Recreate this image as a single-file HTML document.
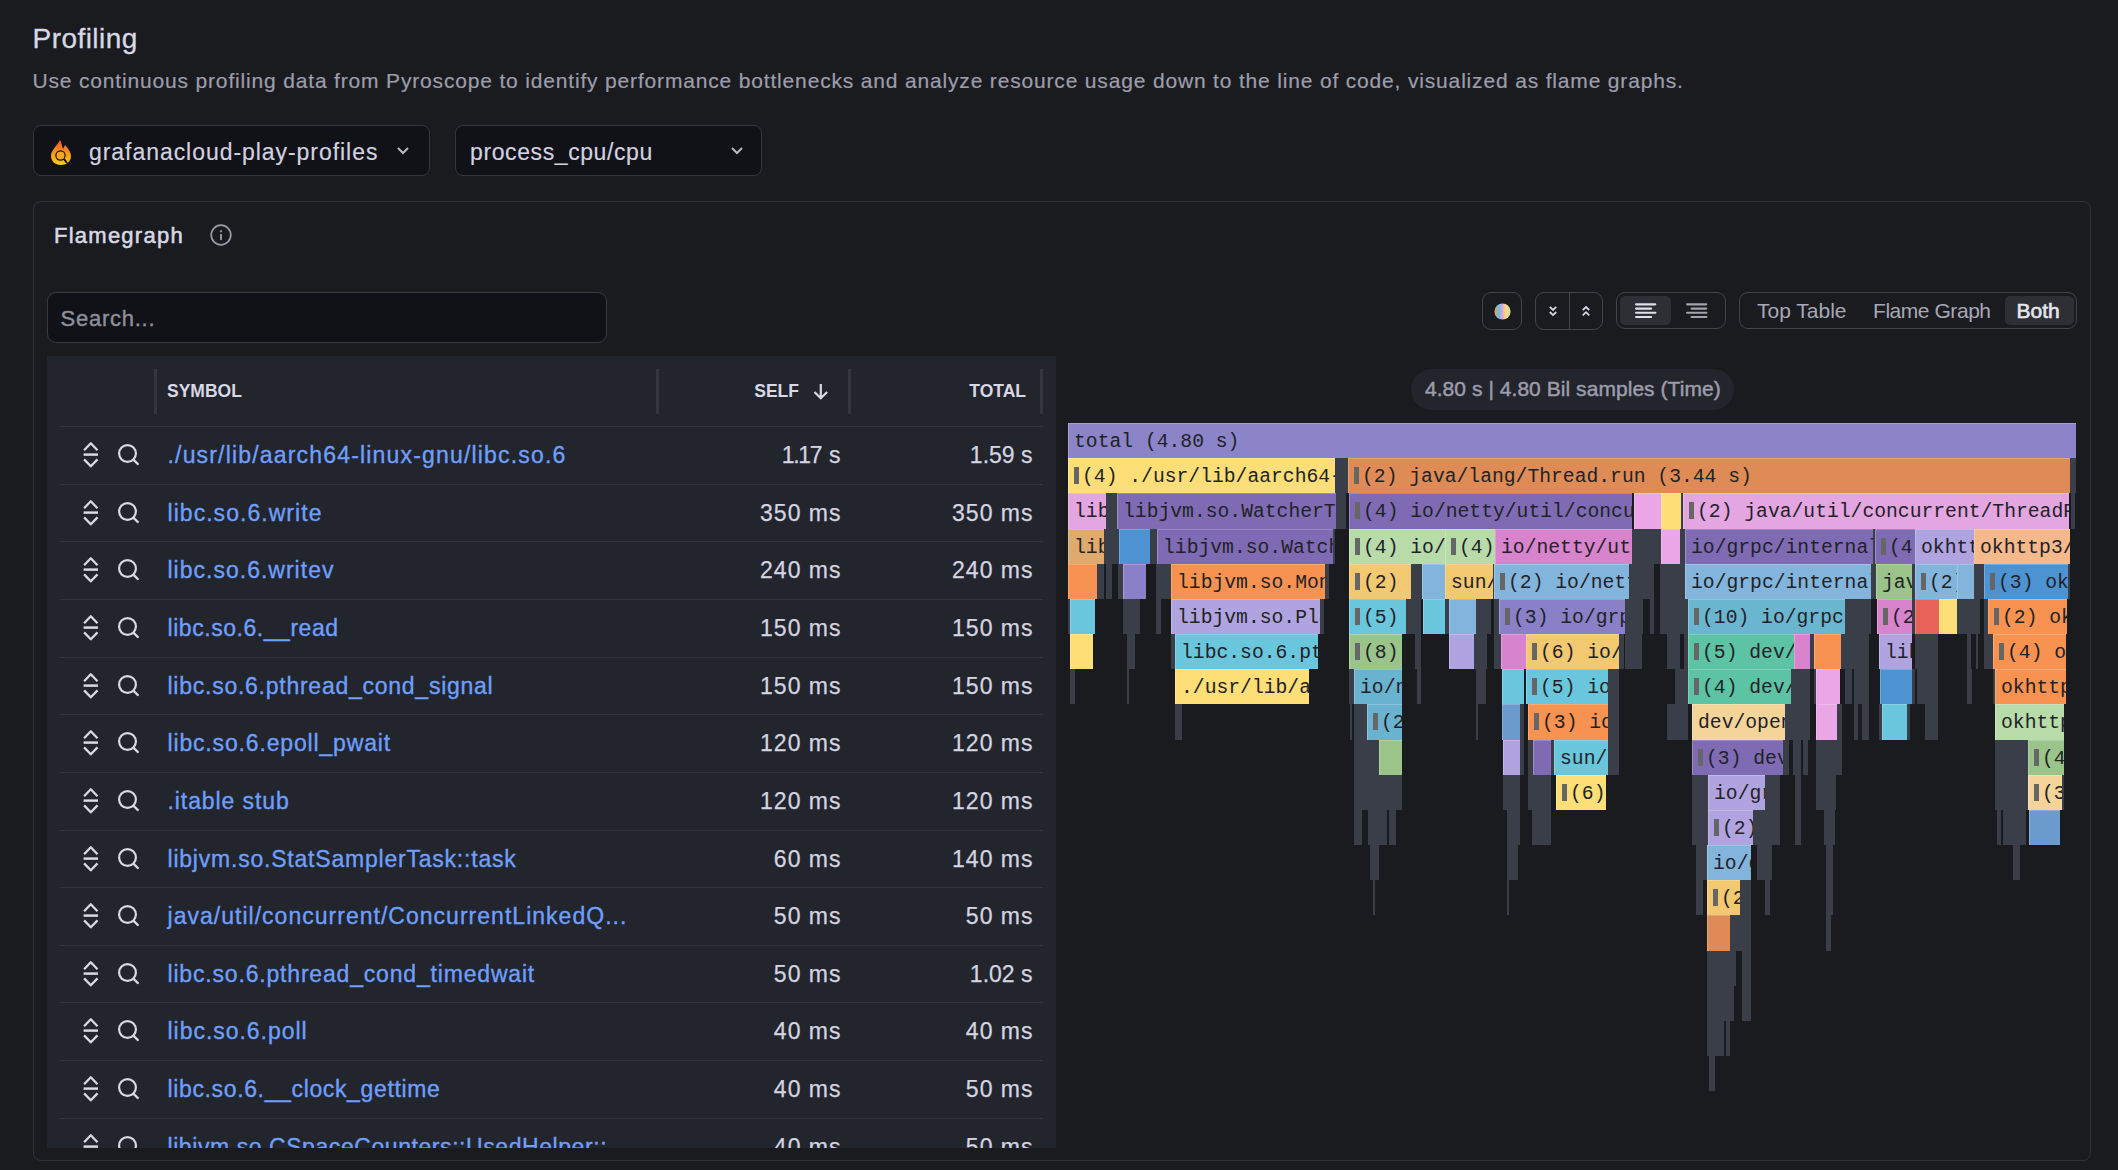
<!DOCTYPE html>
<html><head><meta charset="utf-8">
<style>
*{box-sizing:border-box;margin:0;padding:0}
html,body{width:2118px;height:1170px;overflow:hidden;background:#1a1b1f;font-family:"Liberation Sans",sans-serif;color:#ccccdc}
.a{position:absolute}
.t{white-space:pre;line-height:1}
#title{left:32.5px;top:25px;font-size:28px;letter-spacing:0.45px;color:#d8d8e6;-webkit-text-stroke:0.3px #d8d8e6}
#sub{left:32.5px;top:70px;font-size:21px;letter-spacing:0.83px;color:#9d9dab;-webkit-text-stroke:0.2px #9d9dab}
.dd{top:125px;height:51px;border:1px solid #35363c;border-radius:8px;background:#111217}
.ddt{font-size:23px;color:#d3d3e0;top:14.5px;-webkit-text-stroke:0.15px #d3d3e0}
#panel{left:33px;top:201px;width:2058px;height:960px;border:1px solid #313238;border-radius:8px}
#fgt{left:54px;top:224.5px;font-size:22px;letter-spacing:1.25px;color:#d8d8e6;-webkit-text-stroke:0.55px #d8d8e6}
#search{left:47px;top:292px;width:560px;height:51px;border:1px solid #393a40;border-radius:9px;background:#111217}
#searcht{left:12.5px;top:15px;font-size:22px;letter-spacing:0.75px;color:#8e8e9c;-webkit-text-stroke:0.4px #8e8e9c}
#table{left:47px;top:356px;width:1009px;height:792px;background:#22252b;overflow:hidden}
.hsep{width:2.5px;height:45px;background:#33363d;top:13px}
.ht{font-size:17.5px;font-weight:700;top:27px;color:#d8d8e6}
.row{left:13px;width:983px;height:58px;border-top:1px solid #34363d}
.lnk{left:107.5px;top:17px;font-size:23px;color:#6e9fff;letter-spacing:0.8px;-webkit-text-stroke:0.35px #6e9fff}
.num{font-size:23px;color:#d4d4e2;top:17px;-webkit-text-stroke:0.25px #d4d4e2}
.bt{position:absolute;border:1px solid #43444a;border-radius:9px}
.tbt{font-size:21px;top:18px;color:#a8a8b6}
.fb{position:absolute;overflow:hidden;white-space:pre}
.fc{box-shadow:inset 1px 1px 0 rgba(255,255,255,0.22)}
.lb{position:absolute;left:6px;top:9px;font-family:"Liberation Mono",monospace;font-size:19.7px;line-height:20px;color:#222226}
.gi{position:absolute;left:6px;top:9px;width:5px;height:17px;background:#666}
</style></head><body>
<div id="title" class="a t">Profiling</div>
<div id="sub" class="a t">Use continuous profiling data from Pyroscope to identify performance bottlenecks and analyze resource usage down to the line of code, visualized as flame graphs.</div>

<div class="a dd" style="left:33px;width:397px">
  <svg class="a" style="left:16px;top:13px" width="22" height="27" viewBox="0 0 22 27">
    <defs><linearGradient id="fl" x1="0" y1="0" x2="0" y2="1"><stop offset="0" stop-color="#f05a28"/><stop offset="0.5" stop-color="#f7931e"/><stop offset="1" stop-color="#ffd200"/></linearGradient></defs>
    <path d="M10 1 C12 4 12 8 13 10 L15 6 C19 10 21 14 21 17 C21 23 16 26 11 26 C5 26 1 22 1 17 C1 11 7 7 10 1Z" fill="url(#fl)"/>
    <circle cx="10.5" cy="16.5" r="5.2" fill="#111217"/>
    <circle cx="10.5" cy="16.5" r="4" fill="#f5a623"/>
    <path d="M14 20 L17 24" stroke="#111217" stroke-width="2"/>
  </svg>
  <div class="a t ddt" style="left:55px;letter-spacing:0.95px">grafanacloud-play-profiles</div>
  <svg class="a" style="left:362px;top:20px" width="14" height="10" viewBox="0 0 14 10"><path d="M2 2 L7 7 L12 2" fill="none" stroke="#b8b8c8" stroke-width="2"/></svg>
</div>
<div class="a dd" style="left:455px;width:307px">
  <div class="a t ddt" style="left:14px;letter-spacing:0.6px">process_cpu/cpu</div>
  <svg class="a" style="left:274px;top:20px" width="14" height="10" viewBox="0 0 14 10"><path d="M2 2 L7 7 L12 2" fill="none" stroke="#b8b8c8" stroke-width="2"/></svg>
</div>

<div id="panel" class="a"></div>
<div id="fgt" class="a t">Flamegraph</div>
<svg class="a" style="left:209px;top:223px" width="24" height="24" viewBox="0 0 24 24"><circle cx="12" cy="12" r="9.8" fill="none" stroke="#9a9aaa" stroke-width="1.7"/><circle cx="12" cy="8.3" r="1.15" fill="#9a9aaa"/><path d="M12 11.6 V16.3" stroke="#9a9aaa" stroke-width="1.9" stroke-linecap="round"/></svg>

<div id="search" class="a"><div id="searcht" class="a t">Search...</div></div>

<div id="table" class="a">
  <div class="a hsep" style="left:107.4px"></div>
  <div class="a t ht" style="left:120px">SYMBOL</div>
  <div class="a hsep" style="left:609.4px"></div>
  <div class="a t ht" style="right:257px">SELF</div>
  <svg class="a" style="left:764px;top:26px" width="20" height="20" viewBox="0 0 20 20"><path d="M9.8 2 V16 M3.5 10 L9.8 16.3 L16.1 10" fill="none" stroke="#d8d8e6" stroke-width="2.2"/></svg>
  <div class="a hsep" style="left:801.2px"></div>
  <div class="a t ht" style="right:30px">TOTAL</div>
  <div class="a hsep" style="left:993.4px"></div>
<div class="row a" style="top:70px"><svg class="a" style="left:20px;top:13px" width="20" height="30" viewBox="0 0 20 30"><path d="M4.1 10.2 L10.8 3.3 L17.5 10.2 M4.1 19.4 L10.8 26.3 L17.5 19.4" fill="none" stroke="#d9d9e6" stroke-width="2.3" stroke-linejoin="round"/><path d="M3.6 14.6 H18" stroke="#d9d9e6" stroke-width="2.5"/></svg><svg class="a" style="left:56px;top:15px" width="26" height="28" viewBox="0 0 26 28"><circle cx="11.5" cy="11.5" r="8.4" fill="none" stroke="#d9d9e6" stroke-width="2.2"/><path d="M17.6 17.9 L21.8 22" stroke="#d9d9e6" stroke-width="2.4" stroke-linecap="round"/></svg><div class="a t lnk" style="letter-spacing:1.178px">./usr/lib/aarch64-linux-gnu/libc.so.6</div><div class="a t num" style="right:202.5px;letter-spacing:0px"><span style="letter-spacing:-1.3px">1.1</span>7 s</div><div class="a t num" style="right:10.5px;letter-spacing:0px">1.59 s</div></div>
<div class="row a" style="top:128px"><svg class="a" style="left:20px;top:13px" width="20" height="30" viewBox="0 0 20 30"><path d="M4.1 10.2 L10.8 3.3 L17.5 10.2 M4.1 19.4 L10.8 26.3 L17.5 19.4" fill="none" stroke="#d9d9e6" stroke-width="2.3" stroke-linejoin="round"/><path d="M3.6 14.6 H18" stroke="#d9d9e6" stroke-width="2.5"/></svg><svg class="a" style="left:56px;top:15px" width="26" height="28" viewBox="0 0 26 28"><circle cx="11.5" cy="11.5" r="8.4" fill="none" stroke="#d9d9e6" stroke-width="2.2"/><path d="M17.6 17.9 L21.8 22" stroke="#d9d9e6" stroke-width="2.4" stroke-linecap="round"/></svg><div class="a t lnk" style="letter-spacing:1.043px">libc.so.6.write</div><div class="a t num" style="right:201.5px;letter-spacing:1.0px">350 ms</div><div class="a t num" style="right:9.5px;letter-spacing:1.0px">350 ms</div></div>
<div class="row a" style="top:185px"><svg class="a" style="left:20px;top:13px" width="20" height="30" viewBox="0 0 20 30"><path d="M4.1 10.2 L10.8 3.3 L17.5 10.2 M4.1 19.4 L10.8 26.3 L17.5 19.4" fill="none" stroke="#d9d9e6" stroke-width="2.3" stroke-linejoin="round"/><path d="M3.6 14.6 H18" stroke="#d9d9e6" stroke-width="2.5"/></svg><svg class="a" style="left:56px;top:15px" width="26" height="28" viewBox="0 0 26 28"><circle cx="11.5" cy="11.5" r="8.4" fill="none" stroke="#d9d9e6" stroke-width="2.2"/><path d="M17.6 17.9 L21.8 22" stroke="#d9d9e6" stroke-width="2.4" stroke-linecap="round"/></svg><div class="a t lnk" style="letter-spacing:1.007px">libc.so.6.writev</div><div class="a t num" style="right:201.5px;letter-spacing:1.0px">240 ms</div><div class="a t num" style="right:9.5px;letter-spacing:1.0px">240 ms</div></div>
<div class="row a" style="top:243px"><svg class="a" style="left:20px;top:13px" width="20" height="30" viewBox="0 0 20 30"><path d="M4.1 10.2 L10.8 3.3 L17.5 10.2 M4.1 19.4 L10.8 26.3 L17.5 19.4" fill="none" stroke="#d9d9e6" stroke-width="2.3" stroke-linejoin="round"/><path d="M3.6 14.6 H18" stroke="#d9d9e6" stroke-width="2.5"/></svg><svg class="a" style="left:56px;top:15px" width="26" height="28" viewBox="0 0 26 28"><circle cx="11.5" cy="11.5" r="8.4" fill="none" stroke="#d9d9e6" stroke-width="2.2"/><path d="M17.6 17.9 L21.8 22" stroke="#d9d9e6" stroke-width="2.4" stroke-linecap="round"/></svg><div class="a t lnk" style="letter-spacing:0.547px">libc.so.6.__read</div><div class="a t num" style="right:201.5px;letter-spacing:1.0px">150 ms</div><div class="a t num" style="right:9.5px;letter-spacing:1.0px">150 ms</div></div>
<div class="row a" style="top:301px"><svg class="a" style="left:20px;top:13px" width="20" height="30" viewBox="0 0 20 30"><path d="M4.1 10.2 L10.8 3.3 L17.5 10.2 M4.1 19.4 L10.8 26.3 L17.5 19.4" fill="none" stroke="#d9d9e6" stroke-width="2.3" stroke-linejoin="round"/><path d="M3.6 14.6 H18" stroke="#d9d9e6" stroke-width="2.5"/></svg><svg class="a" style="left:56px;top:15px" width="26" height="28" viewBox="0 0 26 28"><circle cx="11.5" cy="11.5" r="8.4" fill="none" stroke="#d9d9e6" stroke-width="2.2"/><path d="M17.6 17.9 L21.8 22" stroke="#d9d9e6" stroke-width="2.4" stroke-linecap="round"/></svg><div class="a t lnk" style="letter-spacing:0.746px">libc.so.6.pthread_cond_signal</div><div class="a t num" style="right:201.5px;letter-spacing:1.0px">150 ms</div><div class="a t num" style="right:9.5px;letter-spacing:1.0px">150 ms</div></div>
<div class="row a" style="top:358px"><svg class="a" style="left:20px;top:13px" width="20" height="30" viewBox="0 0 20 30"><path d="M4.1 10.2 L10.8 3.3 L17.5 10.2 M4.1 19.4 L10.8 26.3 L17.5 19.4" fill="none" stroke="#d9d9e6" stroke-width="2.3" stroke-linejoin="round"/><path d="M3.6 14.6 H18" stroke="#d9d9e6" stroke-width="2.5"/></svg><svg class="a" style="left:56px;top:15px" width="26" height="28" viewBox="0 0 26 28"><circle cx="11.5" cy="11.5" r="8.4" fill="none" stroke="#d9d9e6" stroke-width="2.2"/><path d="M17.6 17.9 L21.8 22" stroke="#d9d9e6" stroke-width="2.4" stroke-linecap="round"/></svg><div class="a t lnk" style="letter-spacing:0.84px">libc.so.6.epoll_pwait</div><div class="a t num" style="right:201.5px;letter-spacing:1.0px">120 ms</div><div class="a t num" style="right:9.5px;letter-spacing:1.0px">120 ms</div></div>
<div class="row a" style="top:416px"><svg class="a" style="left:20px;top:13px" width="20" height="30" viewBox="0 0 20 30"><path d="M4.1 10.2 L10.8 3.3 L17.5 10.2 M4.1 19.4 L10.8 26.3 L17.5 19.4" fill="none" stroke="#d9d9e6" stroke-width="2.3" stroke-linejoin="round"/><path d="M3.6 14.6 H18" stroke="#d9d9e6" stroke-width="2.5"/></svg><svg class="a" style="left:56px;top:15px" width="26" height="28" viewBox="0 0 26 28"><circle cx="11.5" cy="11.5" r="8.4" fill="none" stroke="#d9d9e6" stroke-width="2.2"/><path d="M17.6 17.9 L21.8 22" stroke="#d9d9e6" stroke-width="2.4" stroke-linecap="round"/></svg><div class="a t lnk" style="letter-spacing:0.918px">.itable stub</div><div class="a t num" style="right:201.5px;letter-spacing:1.0px">120 ms</div><div class="a t num" style="right:9.5px;letter-spacing:1.0px">120 ms</div></div>
<div class="row a" style="top:474px"><svg class="a" style="left:20px;top:13px" width="20" height="30" viewBox="0 0 20 30"><path d="M4.1 10.2 L10.8 3.3 L17.5 10.2 M4.1 19.4 L10.8 26.3 L17.5 19.4" fill="none" stroke="#d9d9e6" stroke-width="2.3" stroke-linejoin="round"/><path d="M3.6 14.6 H18" stroke="#d9d9e6" stroke-width="2.5"/></svg><svg class="a" style="left:56px;top:15px" width="26" height="28" viewBox="0 0 26 28"><circle cx="11.5" cy="11.5" r="8.4" fill="none" stroke="#d9d9e6" stroke-width="2.2"/><path d="M17.6 17.9 L21.8 22" stroke="#d9d9e6" stroke-width="2.4" stroke-linecap="round"/></svg><div class="a t lnk" style="letter-spacing:0.787px">libjvm.so.StatSamplerTask::task</div><div class="a t num" style="right:201.5px;letter-spacing:1.0px">60 ms</div><div class="a t num" style="right:9.5px;letter-spacing:1.0px">140 ms</div></div>
<div class="row a" style="top:531px"><svg class="a" style="left:20px;top:13px" width="20" height="30" viewBox="0 0 20 30"><path d="M4.1 10.2 L10.8 3.3 L17.5 10.2 M4.1 19.4 L10.8 26.3 L17.5 19.4" fill="none" stroke="#d9d9e6" stroke-width="2.3" stroke-linejoin="round"/><path d="M3.6 14.6 H18" stroke="#d9d9e6" stroke-width="2.5"/></svg><svg class="a" style="left:56px;top:15px" width="26" height="28" viewBox="0 0 26 28"><circle cx="11.5" cy="11.5" r="8.4" fill="none" stroke="#d9d9e6" stroke-width="2.2"/><path d="M17.6 17.9 L21.8 22" stroke="#d9d9e6" stroke-width="2.4" stroke-linecap="round"/></svg><div class="a t lnk" style="letter-spacing:1.02px">java/util/concurrent/ConcurrentLinkedQ...</div><div class="a t num" style="right:201.5px;letter-spacing:1.0px">50 ms</div><div class="a t num" style="right:9.5px;letter-spacing:1.0px">50 ms</div></div>
<div class="row a" style="top:589px"><svg class="a" style="left:20px;top:13px" width="20" height="30" viewBox="0 0 20 30"><path d="M4.1 10.2 L10.8 3.3 L17.5 10.2 M4.1 19.4 L10.8 26.3 L17.5 19.4" fill="none" stroke="#d9d9e6" stroke-width="2.3" stroke-linejoin="round"/><path d="M3.6 14.6 H18" stroke="#d9d9e6" stroke-width="2.5"/></svg><svg class="a" style="left:56px;top:15px" width="26" height="28" viewBox="0 0 26 28"><circle cx="11.5" cy="11.5" r="8.4" fill="none" stroke="#d9d9e6" stroke-width="2.2"/><path d="M17.6 17.9 L21.8 22" stroke="#d9d9e6" stroke-width="2.4" stroke-linecap="round"/></svg><div class="a t lnk" style="letter-spacing:0.819px">libc.so.6.pthread_cond_timedwait</div><div class="a t num" style="right:201.5px;letter-spacing:1.0px">50 ms</div><div class="a t num" style="right:10.5px;letter-spacing:0px">1.02 s</div></div>
<div class="row a" style="top:646px"><svg class="a" style="left:20px;top:13px" width="20" height="30" viewBox="0 0 20 30"><path d="M4.1 10.2 L10.8 3.3 L17.5 10.2 M4.1 19.4 L10.8 26.3 L17.5 19.4" fill="none" stroke="#d9d9e6" stroke-width="2.3" stroke-linejoin="round"/><path d="M3.6 14.6 H18" stroke="#d9d9e6" stroke-width="2.5"/></svg><svg class="a" style="left:56px;top:15px" width="26" height="28" viewBox="0 0 26 28"><circle cx="11.5" cy="11.5" r="8.4" fill="none" stroke="#d9d9e6" stroke-width="2.2"/><path d="M17.6 17.9 L21.8 22" stroke="#d9d9e6" stroke-width="2.4" stroke-linecap="round"/></svg><div class="a t lnk" style="letter-spacing:0.969px">libc.so.6.poll</div><div class="a t num" style="right:201.5px;letter-spacing:1.0px">40 ms</div><div class="a t num" style="right:9.5px;letter-spacing:1.0px">40 ms</div></div>
<div class="row a" style="top:704px"><svg class="a" style="left:20px;top:13px" width="20" height="30" viewBox="0 0 20 30"><path d="M4.1 10.2 L10.8 3.3 L17.5 10.2 M4.1 19.4 L10.8 26.3 L17.5 19.4" fill="none" stroke="#d9d9e6" stroke-width="2.3" stroke-linejoin="round"/><path d="M3.6 14.6 H18" stroke="#d9d9e6" stroke-width="2.5"/></svg><svg class="a" style="left:56px;top:15px" width="26" height="28" viewBox="0 0 26 28"><circle cx="11.5" cy="11.5" r="8.4" fill="none" stroke="#d9d9e6" stroke-width="2.2"/><path d="M17.6 17.9 L21.8 22" stroke="#d9d9e6" stroke-width="2.4" stroke-linecap="round"/></svg><div class="a t lnk" style="letter-spacing:0.638px">libc.so.6.__clock_gettime</div><div class="a t num" style="right:201.5px;letter-spacing:1.0px">40 ms</div><div class="a t num" style="right:9.5px;letter-spacing:1.0px">50 ms</div></div>
<div class="row a" style="top:762px"><svg class="a" style="left:20px;top:13px" width="20" height="30" viewBox="0 0 20 30"><path d="M4.1 10.2 L10.8 3.3 L17.5 10.2 M4.1 19.4 L10.8 26.3 L17.5 19.4" fill="none" stroke="#d9d9e6" stroke-width="2.3" stroke-linejoin="round"/><path d="M3.6 14.6 H18" stroke="#d9d9e6" stroke-width="2.5"/></svg><svg class="a" style="left:56px;top:15px" width="26" height="28" viewBox="0 0 26 28"><circle cx="11.5" cy="11.5" r="8.4" fill="none" stroke="#d9d9e6" stroke-width="2.2"/><path d="M17.6 17.9 L21.8 22" stroke="#d9d9e6" stroke-width="2.4" stroke-linecap="round"/></svg><div class="a t lnk" style="letter-spacing:0.568px">libjvm.so.CSpaceCounters::UsedHelper::...</div><div class="a t num" style="right:201.5px;letter-spacing:1.0px">40 ms</div><div class="a t num" style="right:9.5px;letter-spacing:1.0px">50 ms</div></div>
</div>

<!-- toolbar -->
<div class="bt" style="left:1482px;top:292px;width:40px;height:38px">
  <svg class="a" style="left:10.7px;top:9.5px" width="17" height="17" viewBox="0 0 17 17"><defs><linearGradient id="cg" x1="0" y1="0" x2="1" y2="0"><stop offset="0" stop-color="#f0955a"/><stop offset="0.3" stop-color="#66c2dc"/><stop offset="0.5" stop-color="#e8a2e0"/><stop offset="0.7" stop-color="#fddc70"/><stop offset="1" stop-color="#c2e4b0"/></linearGradient></defs><circle cx="8.5" cy="8.5" r="8.1" fill="url(#cg)"/></svg>
</div>
<div class="bt" style="left:1535px;top:292px;width:68px;height:38px">
  <div class="a" style="left:33px;top:0;width:1px;height:36px;background:#43444a"></div>
  <svg class="a" style="left:12px;top:12px" width="10" height="13" viewBox="0 0 10 13"><path d="M1.8 1.8 L5 4.9 L8.2 1.8 M1.8 7 L5 10.1 L8.2 7" fill="none" stroke="#d8d8e6" stroke-width="1.8"/></svg>
  <svg class="a" style="left:45px;top:12.3px" width="10" height="13" viewBox="0 0 10 13"><path d="M1.7 5.2 L5 2 L8.3 5.2 M1.7 10.4 L5 7.2 L8.3 10.4" fill="none" stroke="#d8d8e6" stroke-width="1.8"/></svg>
</div>
<div class="bt" style="left:1616px;top:292px;width:110px;height:37px">
  <div class="a" style="left:3px;top:3px;width:51px;height:29px;background:#2d2f35;border-radius:5px"></div>
  <svg class="a" style="left:18px;top:10px" width="24" height="16" viewBox="0 0 24 16"><path d="M1.1 1.3 H20.2 M1.1 5.53 H16.1 M1.1 9.76 H20.4 M1.1 14 H16.1" stroke="#e0e0ec" stroke-width="2.2" stroke-linecap="round"/></svg>
  <svg class="a" style="left:69px;top:10px" width="24" height="16" viewBox="0 0 24 16"><path d="M1.1 1.3 H20.2 M5.6 5.53 H20.2 M1.1 9.76 H20.4 M5.6 14 H20.4" stroke="#a2a2b0" stroke-width="2.2" stroke-linecap="round"/></svg>
</div>
<div class="bt" style="left:1739px;top:292px;width:338px;height:37px">
  <div class="a t tbt" style="left:17px;top:7px">Top Table</div>
  <div class="a t tbt" style="left:133px;top:7px;letter-spacing:-0.45px">Flame Graph</div>
  <div class="a" style="left:265px;top:3px;width:69px;height:29px;background:#2d2f35;border-radius:5px"></div>
  <div class="a t tbt" style="left:276.5px;top:7px;color:#e6e6f0;-webkit-text-stroke:0.6px #e6e6f0">Both</div>
</div>

<div class="a" style="left:1411px;top:369px;width:323px;height:41px;border-radius:21px;background:#22252b"></div>
<div class="a t" style="left:1425px;top:378px;font-size:21px;letter-spacing:0.05px;color:#9d9dab;-webkit-text-stroke:0.45px #9d9dab">4.80 s | 4.80 Bil samples (Time)</div>

<div id="fg">
<div class="fb fc" style="left:1068px;top:423px;width:1008px;height:35px;background:#8b84c8"><span class="lb">total (4.80 s)</span></div>
<div class="fb fc" style="left:1068px;top:458px;width:267px;height:35px;background:#fdde77"><i class="gi"></i><span class="lb" style="left:14px">(4) ./usr/lib/aarch64-linux-gnu/libc.so.6</span></div>
<div class="fb" style="left:1335px;top:458px;width:13px;height:35px;background:#3a3e48"></div>
<div class="fb fc" style="left:1348px;top:458px;width:722px;height:35px;background:#df8b55"><i class="gi"></i><span class="lb" style="left:14px">(2) java/lang/Thread.run (3.44 s)</span></div>
<div class="fb" style="left:2070px;top:458px;width:6px;height:35px;background:#3a3e48"></div>
<div class="fb fc" style="left:1068px;top:493px;width:38px;height:36px;background:#e4a6e0"><span class="lb">libc.so.6</span></div>
<div class="fb" style="left:1106px;top:493px;width:11px;height:36px;background:#3a3e48"></div>
<div class="fb fc" style="left:1117px;top:493px;width:219px;height:36px;background:#7e6bb4"><span class="lb">libjvm.so.WatcherThread::run</span></div>
<div class="fb" style="left:1336px;top:493px;width:10px;height:36px;background:#3a3e48"></div>
<div class="fb fc" style="left:1349px;top:493px;width:283px;height:36px;background:#7e6bb4"><i class="gi"></i><span class="lb" style="left:14px">(4) io/netty/util/concurrent/FastThreadLocalRunnable.run</span></div>
<div class="fb fc" style="left:1634px;top:493px;width:27px;height:36px;background:#eaa6e6"></div>
<div class="fb fc" style="left:1661px;top:493px;width:20px;height:36px;background:#fdde77"></div>
<div class="fb" style="left:1681px;top:493px;width:2px;height:36px;background:#3a3e48"></div>
<div class="fb fc" style="left:1683px;top:493px;width:386px;height:36px;background:#e4a6e0"><i class="gi"></i><span class="lb" style="left:14px">(2) java/util/concurrent/ThreadPoolExecutor$Worker.run</span></div>
<div class="fb" style="left:2071px;top:493px;width:4px;height:36px;background:#3a3e48"></div>
<div class="fb fc" style="left:1068px;top:529px;width:36px;height:35px;background:#dfaa6d"><span class="lb">libjvm.so</span></div>
<div class="fb" style="left:1104px;top:529px;width:15px;height:35px;background:#3a3e48"></div>
<div class="fb fc" style="left:1119px;top:529px;width:31px;height:35px;background:#4d92d1"></div>
<div class="fb" style="left:1150px;top:529px;width:7px;height:35px;background:#3a3e48"></div>
<div class="fb fc" style="left:1157px;top:529px;width:176px;height:35px;background:#7e6bb4"><span class="lb">libjvm.so.WatcherThread::sleep</span></div>
<div class="fb" style="left:1333px;top:529px;width:2px;height:35px;background:#3a3e48"></div>
<div class="fb fc" style="left:1349px;top:529px;width:96px;height:35px;background:#b8dbaa"><i class="gi"></i><span class="lb" style="left:14px">(4) io/netty</span></div>
<div class="fb fc" style="left:1445px;top:529px;width:50px;height:35px;background:#b8dbaa"><i class="gi"></i><span class="lb" style="left:14px">(4) io</span></div>
<div class="fb fc" style="left:1495px;top:529px;width:137px;height:35px;background:#d884cd"><span class="lb">io/netty/util/concurrent</span></div>
<div class="fb" style="left:1632px;top:529px;width:29px;height:35px;background:#3a3e48"></div>
<div class="fb fc" style="left:1661px;top:529px;width:19px;height:35px;background:#eaa6e6"></div>
<div class="fb" style="left:1680px;top:529px;width:5px;height:35px;background:#3a3e48"></div>
<div class="fb fc" style="left:1685px;top:529px;width:188px;height:35px;background:#7e6bb4"><span class="lb">io/grpc/internal/SerializingExecutor.run</span></div>
<div class="fb" style="left:1873px;top:529px;width:2px;height:35px;background:#3a3e48"></div>
<div class="fb fc" style="left:1875px;top:529px;width:40px;height:35px;background:#7e6bb4"><i class="gi"></i><span class="lb" style="left:14px">(4) io</span></div>
<div class="fb fc" style="left:1915px;top:529px;width:59px;height:35px;background:#b0a4e0"><span class="lb">okhttp3</span></div>
<div class="fb fc" style="left:1974px;top:529px;width:96px;height:35px;background:#f6b98b"><span class="lb">okhttp3/internal</span></div>
<div class="fb fc" style="left:1068px;top:564px;width:29px;height:35px;background:#f79250"></div>
<div class="fb" style="left:1097px;top:564px;width:7px;height:35px;background:#3a3e48"></div>
<div class="fb" style="left:1106px;top:564px;width:6px;height:35px;background:#3a3e48"></div>
<div class="fb" style="left:1118px;top:564px;width:5px;height:35px;background:#3a3e48"></div>
<div class="fb fc" style="left:1123px;top:564px;width:23px;height:35px;background:#8a80c8"></div>
<div class="fb" style="left:1156px;top:564px;width:15px;height:35px;background:#3a3e48"></div>
<div class="fb fc" style="left:1171px;top:564px;width:154px;height:35px;background:#f79250"><span class="lb">libjvm.so.Monitor::wait</span></div>
<div class="fb" style="left:1325px;top:564px;width:4px;height:35px;background:#3a3e48"></div>
<div class="fb fc" style="left:1349px;top:564px;width:62px;height:35px;background:#f2c871"><i class="gi"></i><span class="lb" style="left:14px">(2) io</span></div>
<div class="fb" style="left:1411px;top:564px;width:11px;height:35px;background:#3a3e48"></div>
<div class="fb fc" style="left:1422px;top:564px;width:23px;height:35px;background:#83b5dc"></div>
<div class="fb fc" style="left:1445px;top:564px;width:48px;height:35px;background:#f2c871"><span class="lb">sun/nio</span></div>
<div class="fb" style="left:1493px;top:564px;width:1px;height:35px;background:#3a3e48"></div>
<div class="fb fc" style="left:1494px;top:564px;width:135px;height:35px;background:#83b5dc"><i class="gi"></i><span class="lb" style="left:14px">(2) io/netty/channel</span></div>
<div class="fb" style="left:1629px;top:564px;width:25px;height:35px;background:#3a3e48"></div>
<div class="fb" style="left:1660px;top:564px;width:20px;height:35px;background:#3a3e48"></div>
<div class="fb" style="left:1680px;top:564px;width:5px;height:35px;background:#3a3e48"></div>
<div class="fb fc" style="left:1685px;top:564px;width:186px;height:35px;background:#83b5dc"><span class="lb">io/grpc/internal/ContextRunnable.run</span></div>
<div class="fb" style="left:1871px;top:564px;width:5px;height:35px;background:#3a3e48"></div>
<div class="fb fc" style="left:1876px;top:564px;width:36px;height:35px;background:#9ac48a"><span class="lb">java/util</span></div>
<div class="fb" style="left:1912px;top:564px;width:3px;height:35px;background:#3a3e48"></div>
<div class="fb fc" style="left:1915px;top:564px;width:42px;height:35px;background:#83b5dc"><i class="gi"></i><span class="lb" style="left:14px">(2) io</span></div>
<div class="fb fc" style="left:1957px;top:564px;width:17px;height:35px;background:#83b5dc"></div>
<div class="fb" style="left:1974px;top:564px;width:10px;height:35px;background:#3a3e48"></div>
<div class="fb fc" style="left:1984px;top:564px;width:84px;height:35px;background:#4d92d1"><i class="gi"></i><span class="lb" style="left:14px">(3) okhttp3</span></div>
<div class="fb" style="left:2068px;top:564px;width:2px;height:35px;background:#3a3e48"></div>
<div class="fb" style="left:1068px;top:599px;width:2px;height:35px;background:#3a3e48"></div>
<div class="fb fc" style="left:1070px;top:599px;width:25px;height:35px;background:#69c6dc"></div>
<div class="fb" style="left:1123px;top:599px;width:17px;height:35px;background:#3a3e48"></div>
<div class="fb" style="left:1156px;top:599px;width:5px;height:35px;background:#3a3e48"></div>
<div class="fb fc" style="left:1171px;top:599px;width:149px;height:35px;background:#b0a4e0"><span class="lb">libjvm.so.PlatformMonitor</span></div>
<div class="fb" style="left:1320px;top:599px;width:4px;height:35px;background:#3a3e48"></div>
<div class="fb fc" style="left:1349px;top:599px;width:57px;height:35px;background:#69c6dc"><i class="gi"></i><span class="lb" style="left:14px">(5) io</span></div>
<div class="fb" style="left:1406px;top:599px;width:15px;height:35px;background:#3a3e48"></div>
<div class="fb fc" style="left:1423px;top:599px;width:22px;height:35px;background:#69c6dc"></div>
<div class="fb" style="left:1445px;top:599px;width:4px;height:35px;background:#3a3e48"></div>
<div class="fb fc" style="left:1449px;top:599px;width:27px;height:35px;background:#83b5dc"></div>
<div class="fb" style="left:1476px;top:599px;width:15px;height:35px;background:#3a3e48"></div>
<div class="fb" style="left:1494px;top:599px;width:5px;height:35px;background:#3a3e48"></div>
<div class="fb fc" style="left:1499px;top:599px;width:126px;height:35px;background:#8a80c8"><i class="gi"></i><span class="lb" style="left:14px">(3) io/grpc/netty</span></div>
<div class="fb" style="left:1625px;top:599px;width:18px;height:35px;background:#3a3e48"></div>
<div class="fb" style="left:1650px;top:599px;width:4px;height:35px;background:#3a3e48"></div>
<div class="fb" style="left:1660px;top:599px;width:24px;height:35px;background:#3a3e48"></div>
<div class="fb" style="left:1684px;top:599px;width:4px;height:35px;background:#3a3e48"></div>
<div class="fb fc" style="left:1688px;top:599px;width:157px;height:35px;background:#6ab5d0"><i class="gi"></i><span class="lb" style="left:14px">(10) io/grpc/internal</span></div>
<div class="fb" style="left:1845px;top:599px;width:26px;height:35px;background:#3a3e48"></div>
<div class="fb fc" style="left:1877px;top:599px;width:35px;height:35px;background:#d884cd"><i class="gi"></i><span class="lb" style="left:14px">(2) io</span></div>
<div class="fb" style="left:1912px;top:599px;width:3px;height:35px;background:#3a3e48"></div>
<div class="fb fc" style="left:1915px;top:599px;width:24px;height:35px;background:#e8625a"></div>
<div class="fb fc" style="left:1939px;top:599px;width:18px;height:35px;background:#fdde77"></div>
<div class="fb" style="left:1957px;top:599px;width:23px;height:35px;background:#3a3e48"></div>
<div class="fb" style="left:1984px;top:599px;width:4px;height:35px;background:#3a3e48"></div>
<div class="fb fc" style="left:1988px;top:599px;width:79px;height:35px;background:#f79250"><i class="gi"></i><span class="lb" style="left:14px">(2) okhttp3</span></div>
<div class="fb fc" style="left:1070px;top:634px;width:23px;height:35px;background:#fdde77"></div>
<div class="fb" style="left:1127px;top:634px;width:8px;height:35px;background:#3a3e48"></div>
<div class="fb" style="left:1171px;top:634px;width:4px;height:35px;background:#3a3e48"></div>
<div class="fb fc" style="left:1175px;top:634px;width:143px;height:35px;background:#69c6dc"><span class="lb">libc.so.6.pthread_cond_wait</span></div>
<div class="fb fc" style="left:1349px;top:634px;width:53px;height:35px;background:#9ac48a"><i class="gi"></i><span class="lb" style="left:14px">(8) io</span></div>
<div class="fb" style="left:1415px;top:634px;width:6px;height:35px;background:#3a3e48"></div>
<div class="fb fc" style="left:1449px;top:634px;width:25px;height:35px;background:#b0a4e0"></div>
<div class="fb" style="left:1474px;top:634px;width:13px;height:35px;background:#3a3e48"></div>
<div class="fb" style="left:1494px;top:634px;width:7px;height:35px;background:#3a3e48"></div>
<div class="fb fc" style="left:1501px;top:634px;width:25px;height:35px;background:#d884cd"></div>
<div class="fb fc" style="left:1526px;top:634px;width:93px;height:35px;background:#f2c871"><i class="gi"></i><span class="lb" style="left:14px">(6) io/grpc</span></div>
<div class="fb" style="left:1619px;top:634px;width:5px;height:35px;background:#3a3e48"></div>
<div class="fb" style="left:1619px;top:634px;width:2px;height:35px;background:#3a3e48"></div>
<div class="fb" style="left:1625px;top:634px;width:5px;height:35px;background:#3a3e48"></div>
<div class="fb" style="left:1630px;top:634px;width:8px;height:35px;background:#3a3e48"></div>
<div class="fb" style="left:1638px;top:634px;width:4px;height:35px;background:#3a3e48"></div>
<div class="fb" style="left:1667px;top:634px;width:13px;height:35px;background:#3a3e48"></div>
<div class="fb" style="left:1684px;top:634px;width:4px;height:35px;background:#3a3e48"></div>
<div class="fb fc" style="left:1688px;top:634px;width:106px;height:35px;background:#5cc3a5"><i class="gi"></i><span class="lb" style="left:14px">(5) dev/openfeature</span></div>
<div class="fb fc" style="left:1794px;top:634px;width:16px;height:35px;background:#d884cd"></div>
<div class="fb" style="left:1810px;top:634px;width:4px;height:35px;background:#3a3e48"></div>
<div class="fb fc" style="left:1814px;top:634px;width:27px;height:35px;background:#f79250"></div>
<div class="fb" style="left:1841px;top:634px;width:28px;height:35px;background:#3a3e48"></div>
<div class="fb fc" style="left:1879px;top:634px;width:33px;height:35px;background:#b0a4e0"><span class="lb">libc</span></div>
<div class="fb" style="left:1915px;top:634px;width:23px;height:35px;background:#3a3e48"></div>
<div class="fb" style="left:1967px;top:634px;width:4px;height:35px;background:#3a3e48"></div>
<div class="fb" style="left:1976px;top:634px;width:2px;height:35px;background:#3a3e48"></div>
<div class="fb" style="left:1984px;top:634px;width:9px;height:35px;background:#3a3e48"></div>
<div class="fb fc" style="left:1993px;top:634px;width:73px;height:35px;background:#f79250"><i class="gi"></i><span class="lb" style="left:14px">(4) okhttp3</span></div>
<div class="fb" style="left:1070px;top:669px;width:5px;height:35px;background:#3a3e48"></div>
<div class="fb" style="left:1127px;top:669px;width:2px;height:35px;background:#3a3e48"></div>
<div class="fb fc" style="left:1175px;top:669px;width:134px;height:35px;background:#fdde77"><span class="lb">./usr/lib/aarch64-linux-gnu</span></div>
<div class="fb" style="left:1349px;top:669px;width:5px;height:35px;background:#3a3e48"></div>
<div class="fb" style="left:1350px;top:669px;width:4px;height:35px;background:#3a3e48"></div>
<div class="fb fc" style="left:1354px;top:669px;width:48px;height:35px;background:#6ab3d0"><span class="lb">io/netty/channel</span></div>
<div class="fb" style="left:1417px;top:669px;width:4px;height:35px;background:#3a3e48"></div>
<div class="fb" style="left:1476px;top:669px;width:10px;height:35px;background:#3a3e48"></div>
<div class="fb fc" style="left:1502px;top:669px;width:22px;height:35px;background:#69c6dc"></div>
<div class="fb fc" style="left:1526px;top:669px;width:82px;height:35px;background:#69c6dc"><i class="gi"></i><span class="lb" style="left:14px">(5) io/grpc</span></div>
<div class="fb" style="left:1608px;top:669px;width:11px;height:35px;background:#3a3e48"></div>
<div class="fb" style="left:1608px;top:669px;width:11px;height:35px;background:#3a3e48"></div>
<div class="fb" style="left:1675px;top:669px;width:13px;height:35px;background:#3a3e48"></div>
<div class="fb fc" style="left:1688px;top:669px;width:103px;height:35px;background:#5cc3a5"><i class="gi"></i><span class="lb" style="left:14px">(4) dev/openfeature</span></div>
<div class="fb" style="left:1791px;top:669px;width:19px;height:35px;background:#3a3e48"></div>
<div class="fb" style="left:1814px;top:669px;width:2px;height:35px;background:#3a3e48"></div>
<div class="fb fc" style="left:1816px;top:669px;width:24px;height:35px;background:#eaa6e6"></div>
<div class="fb" style="left:1845px;top:669px;width:7px;height:35px;background:#3a3e48"></div>
<div class="fb" style="left:1854px;top:669px;width:15px;height:35px;background:#3a3e48"></div>
<div class="fb fc" style="left:1880px;top:669px;width:32px;height:35px;background:#4d92d1"></div>
<div class="fb" style="left:1912px;top:669px;width:3px;height:35px;background:#3a3e48"></div>
<div class="fb" style="left:1917px;top:669px;width:5px;height:35px;background:#3a3e48"></div>
<div class="fb" style="left:1922px;top:669px;width:16px;height:35px;background:#3a3e48"></div>
<div class="fb" style="left:1967px;top:669px;width:5px;height:35px;background:#3a3e48"></div>
<div class="fb" style="left:1993px;top:669px;width:2px;height:35px;background:#3a3e48"></div>
<div class="fb fc" style="left:1995px;top:669px;width:71px;height:35px;background:#f79250"><span class="lb">okhttp3/internal</span></div>
<div class="fb" style="left:1175px;top:704px;width:7px;height:36px;background:#3a3e48"></div>
<div class="fb" style="left:1350px;top:704px;width:2px;height:36px;background:#3a3e48"></div>
<div class="fb" style="left:1354px;top:704px;width:13px;height:36px;background:#3a3e48"></div>
<div class="fb fc" style="left:1367px;top:704px;width:35px;height:36px;background:#6ab3d0"><i class="gi"></i><span class="lb" style="left:14px">(2) io</span></div>
<div class="fb" style="left:1476px;top:704px;width:2px;height:36px;background:#3a3e48"></div>
<div class="fb fc" style="left:1502px;top:704px;width:18px;height:36px;background:#6b9bcd"></div>
<div class="fb" style="left:1520px;top:704px;width:4px;height:36px;background:#3a3e48"></div>
<div class="fb fc" style="left:1528px;top:704px;width:80px;height:36px;background:#f79250"><i class="gi"></i><span class="lb" style="left:14px">(3) io/grpc</span></div>
<div class="fb" style="left:1608px;top:704px;width:11px;height:36px;background:#3a3e48"></div>
<div class="fb" style="left:1608px;top:704px;width:11px;height:36px;background:#3a3e48"></div>
<div class="fb" style="left:1667px;top:704px;width:7px;height:36px;background:#3a3e48"></div>
<div class="fb" style="left:1674px;top:704px;width:14px;height:36px;background:#3a3e48"></div>
<div class="fb fc" style="left:1692px;top:704px;width:93px;height:36px;background:#f5d49a"><span class="lb">dev/openfeature</span></div>
<div class="fb" style="left:1785px;top:704px;width:8px;height:36px;background:#3a3e48"></div>
<div class="fb" style="left:1793px;top:704px;width:17px;height:36px;background:#3a3e48"></div>
<div class="fb fc" style="left:1816px;top:704px;width:21px;height:36px;background:#eaa6e6"></div>
<div class="fb" style="left:1837px;top:704px;width:4px;height:36px;background:#3a3e48"></div>
<div class="fb" style="left:1840px;top:704px;width:2px;height:36px;background:#3a3e48"></div>
<div class="fb" style="left:1854px;top:704px;width:4px;height:36px;background:#3a3e48"></div>
<div class="fb" style="left:1862px;top:704px;width:7px;height:36px;background:#3a3e48"></div>
<div class="fb" style="left:1879px;top:704px;width:3px;height:36px;background:#3a3e48"></div>
<div class="fb fc" style="left:1882px;top:704px;width:25px;height:36px;background:#69c6dc"></div>
<div class="fb" style="left:1907px;top:704px;width:3px;height:36px;background:#3a3e48"></div>
<div class="fb" style="left:1925px;top:704px;width:13px;height:36px;background:#3a3e48"></div>
<div class="fb fc" style="left:1995px;top:704px;width:69px;height:36px;background:#b8dbaa"><span class="lb">okhttp3/internal</span></div>
<div class="fb" style="left:1354px;top:740px;width:25px;height:35px;background:#3a3e48"></div>
<div class="fb fc" style="left:1379px;top:740px;width:23px;height:35px;background:#9ac48a"></div>
<div class="fb fc" style="left:1503px;top:740px;width:17px;height:35px;background:#b0a4e0"></div>
<div class="fb" style="left:1520px;top:740px;width:4px;height:35px;background:#3a3e48"></div>
<div class="fb" style="left:1528px;top:740px;width:5px;height:35px;background:#3a3e48"></div>
<div class="fb fc" style="left:1533px;top:740px;width:18px;height:35px;background:#7e6bb4"></div>
<div class="fb" style="left:1551px;top:740px;width:3px;height:35px;background:#3a3e48"></div>
<div class="fb fc" style="left:1554px;top:740px;width:54px;height:35px;background:#69c6dc"><span class="lb">sun/nio</span></div>
<div class="fb" style="left:1608px;top:740px;width:11px;height:35px;background:#3a3e48"></div>
<div class="fb" style="left:1609px;top:740px;width:10px;height:35px;background:#3a3e48"></div>
<div class="fb fc" style="left:1692px;top:740px;width:91px;height:35px;background:#7e6bb4"><i class="gi"></i><span class="lb" style="left:14px">(3) dev/openfeature</span></div>
<div class="fb" style="left:1783px;top:740px;width:6px;height:35px;background:#3a3e48"></div>
<div class="fb" style="left:1793px;top:740px;width:8px;height:35px;background:#3a3e48"></div>
<div class="fb" style="left:1803px;top:740px;width:5px;height:35px;background:#3a3e48"></div>
<div class="fb" style="left:1816px;top:740px;width:25px;height:35px;background:#3a3e48"></div>
<div class="fb" style="left:1840px;top:740px;width:2px;height:35px;background:#3a3e48"></div>
<div class="fb" style="left:1995px;top:740px;width:33px;height:35px;background:#3a3e48"></div>
<div class="fb fc" style="left:2028px;top:740px;width:36px;height:35px;background:#9ac48a"><i class="gi"></i><span class="lb" style="left:14px">(4) okhttp3</span></div>
<div class="fb" style="left:1354px;top:775px;width:48px;height:35px;background:#3a3e48"></div>
<div class="fb" style="left:1503px;top:775px;width:17px;height:35px;background:#3a3e48"></div>
<div class="fb" style="left:1528px;top:775px;width:23px;height:35px;background:#3a3e48"></div>
<div class="fb fc" style="left:1556px;top:775px;width:50px;height:35px;background:#fdde77"><i class="gi"></i><span class="lb" style="left:14px">(6) sun</span></div>
<div class="fb" style="left:1692px;top:775px;width:16px;height:35px;background:#3a3e48"></div>
<div class="fb fc" style="left:1708px;top:775px;width:57px;height:35px;background:#b0a4e0"><span class="lb">io/grpc</span></div>
<div class="fb" style="left:1765px;top:775px;width:15px;height:35px;background:#3a3e48"></div>
<div class="fb" style="left:1795px;top:775px;width:6px;height:35px;background:#3a3e48"></div>
<div class="fb" style="left:1816px;top:775px;width:20px;height:35px;background:#3a3e48"></div>
<div class="fb" style="left:1995px;top:775px;width:8px;height:35px;background:#3a3e48"></div>
<div class="fb" style="left:2003px;top:775px;width:25px;height:35px;background:#3a3e48"></div>
<div class="fb fc" style="left:2028px;top:775px;width:34px;height:35px;background:#f5d49a"><i class="gi"></i><span class="lb" style="left:14px">(3) okhttp3</span></div>
<div class="fb" style="left:2062px;top:775px;width:2px;height:35px;background:#3a3e48"></div>
<div class="fb" style="left:1354px;top:810px;width:8px;height:35px;background:#3a3e48"></div>
<div class="fb" style="left:1368px;top:810px;width:19px;height:35px;background:#3a3e48"></div>
<div class="fb" style="left:1389px;top:810px;width:7px;height:35px;background:#3a3e48"></div>
<div class="fb" style="left:1507px;top:810px;width:13px;height:35px;background:#3a3e48"></div>
<div class="fb" style="left:1532px;top:810px;width:19px;height:35px;background:#3a3e48"></div>
<div class="fb" style="left:1692px;top:810px;width:16px;height:35px;background:#3a3e48"></div>
<div class="fb fc" style="left:1708px;top:810px;width:45px;height:35px;background:#b0a4e0"><i class="gi"></i><span class="lb" style="left:14px">(2) io</span></div>
<div class="fb" style="left:1753px;top:810px;width:27px;height:35px;background:#3a3e48"></div>
<div class="fb" style="left:1795px;top:810px;width:6px;height:35px;background:#3a3e48"></div>
<div class="fb" style="left:1824px;top:810px;width:11px;height:35px;background:#3a3e48"></div>
<div class="fb" style="left:1997px;top:810px;width:4px;height:35px;background:#3a3e48"></div>
<div class="fb" style="left:2003px;top:810px;width:9px;height:35px;background:#3a3e48"></div>
<div class="fb" style="left:2012px;top:810px;width:14px;height:35px;background:#3a3e48"></div>
<div class="fb fc" style="left:2029px;top:810px;width:31px;height:35px;background:#6b9bcd"></div>
<div class="fb" style="left:1370px;top:845px;width:9px;height:35px;background:#3a3e48"></div>
<div class="fb" style="left:1507px;top:845px;width:11px;height:35px;background:#3a3e48"></div>
<div class="fb" style="left:1696px;top:845px;width:11px;height:35px;background:#3a3e48"></div>
<div class="fb fc" style="left:1707px;top:845px;width:44px;height:35px;background:#83b5dc"><span class="lb">io/grpc</span></div>
<div class="fb" style="left:1757px;top:845px;width:15px;height:35px;background:#3a3e48"></div>
<div class="fb" style="left:1826px;top:845px;width:7px;height:35px;background:#3a3e48"></div>
<div class="fb" style="left:2013px;top:845px;width:7px;height:35px;background:#3a3e48"></div>
<div class="fb" style="left:1373px;top:880px;width:2px;height:35px;background:#3a3e48"></div>
<div class="fb" style="left:1507px;top:880px;width:2px;height:35px;background:#3a3e48"></div>
<div class="fb" style="left:1696px;top:880px;width:7px;height:35px;background:#3a3e48"></div>
<div class="fb fc" style="left:1707px;top:880px;width:33px;height:35px;background:#f2c871"><i class="gi"></i><span class="lb" style="left:14px">(2) io</span></div>
<div class="fb" style="left:1740px;top:880px;width:11px;height:35px;background:#3a3e48"></div>
<div class="fb" style="left:1765px;top:880px;width:5px;height:35px;background:#3a3e48"></div>
<div class="fb" style="left:1826px;top:880px;width:7px;height:35px;background:#3a3e48"></div>
<div class="fb fc" style="left:1707px;top:915px;width:23px;height:36px;background:#df8b55"></div>
<div class="fb" style="left:1730px;top:915px;width:21px;height:36px;background:#3a3e48"></div>
<div class="fb" style="left:1826px;top:915px;width:5px;height:36px;background:#3a3e48"></div>
<div class="fb" style="left:1707px;top:951px;width:25px;height:35px;background:#3a3e48"></div>
<div class="fb" style="left:1732px;top:951px;width:4px;height:35px;background:#3a3e48"></div>
<div class="fb" style="left:1742px;top:951px;width:9px;height:35px;background:#3a3e48"></div>
<div class="fb" style="left:1707px;top:986px;width:25px;height:35px;background:#3a3e48"></div>
<div class="fb" style="left:1732px;top:986px;width:2px;height:35px;background:#3a3e48"></div>
<div class="fb" style="left:1742px;top:986px;width:9px;height:35px;background:#3a3e48"></div>
<div class="fb" style="left:1707px;top:1021px;width:14px;height:35px;background:#3a3e48"></div>
<div class="fb" style="left:1721px;top:1021px;width:3px;height:35px;background:#3a3e48"></div>
<div class="fb" style="left:1726px;top:1021px;width:4px;height:35px;background:#3a3e48"></div>
<div class="fb" style="left:1709px;top:1056px;width:6px;height:35px;background:#3a3e48"></div>
</div>
</body></html>
